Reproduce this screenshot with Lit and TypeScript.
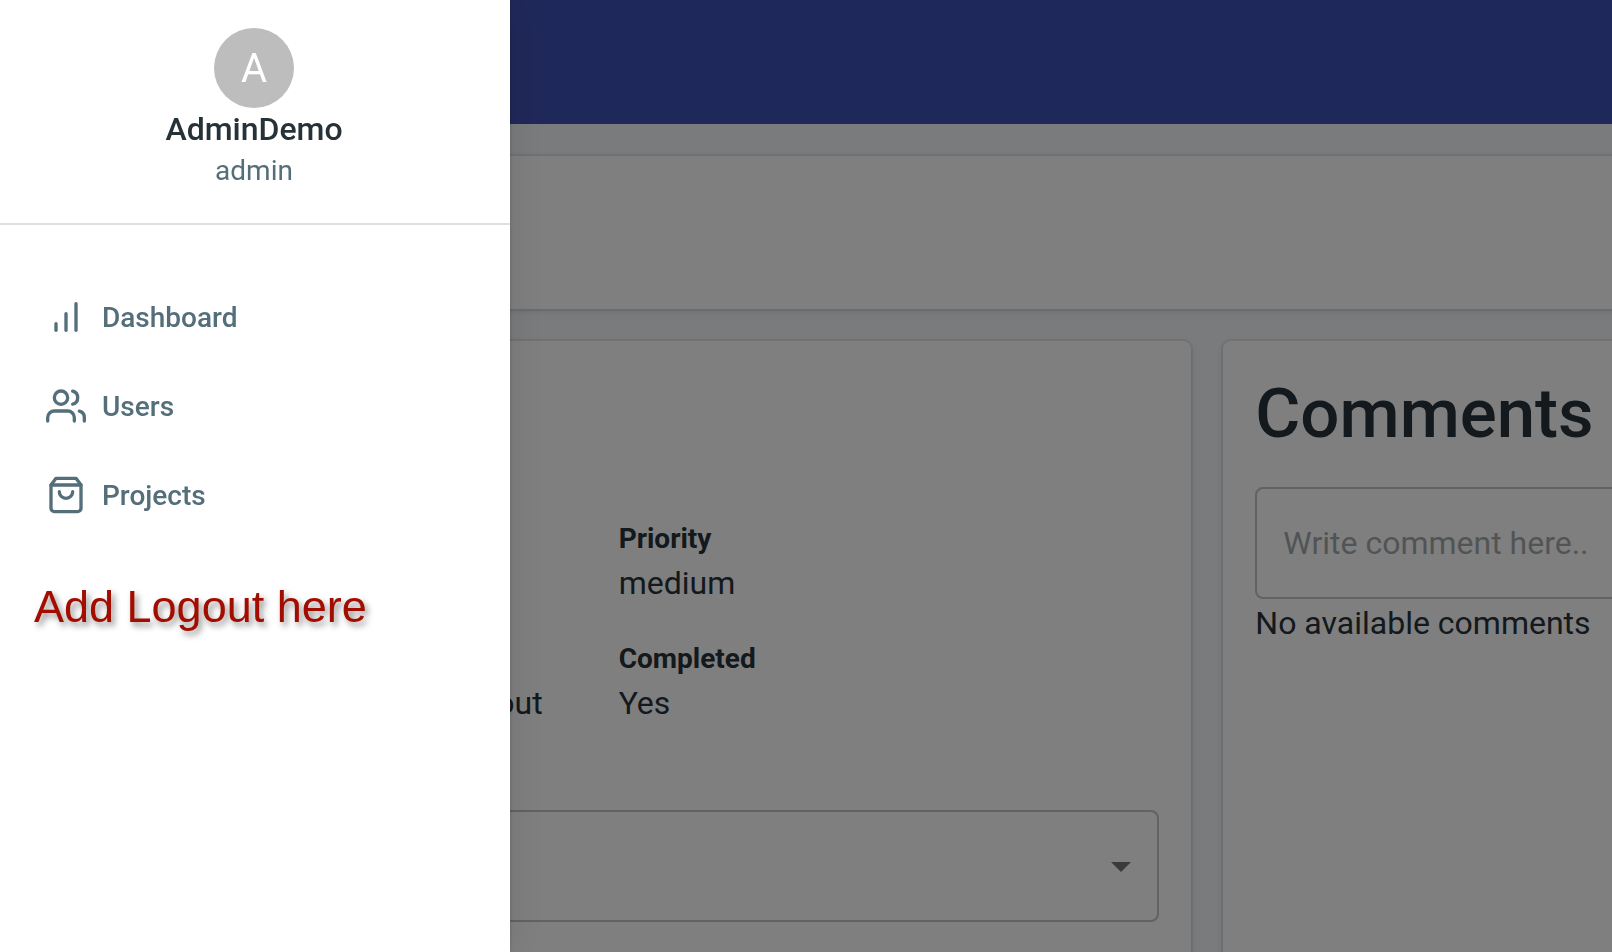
import { LitElement, html, css, svg } from "lit";
import { customElement } from "lit/decorators.js";

const icons = {
  chart: svg`<line x1="12" y1="20" x2="12" y2="10"></line><line x1="18" y1="20" x2="18" y2="4"></line><line x1="6" y1="20" x2="6" y2="16"></line>`,
  users: svg`<path d="M17 21v-2a4 4 0 0 0-4-4H5a4 4 0 0 0-4 4v2"></path><circle cx="9" cy="7" r="4"></circle><path d="M23 21v-2a4 4 0 0 0-3-3.87"></path><path d="M16 3.13a4 4 0 0 1 0 7.75"></path>`,
  bag: svg`<path d="M6 2L3 6v14a2 2 0 0 0 2 2h14a2 2 0 0 0 2-2V6l-3-4z"></path><line x1="3" y1="6" x2="21" y2="6"></line><path d="M16 10a4 4 0 0 1-8 0"></path>`,
};

const links = [
  { label: "Dashboard", icon: icons.chart },
  { label: "Users", icon: icons.users },
  { label: "Projects", icon: icons.bag },
];

@customElement("side-drawer")
export class SideDrawer extends LitElement {
  static styles = css`
    :host {
      display: block;
      box-sizing: border-box;
      background: #fff;
      color: #546e7a;
      overflow: hidden auto;
    }
    .profile {
      display: flex;
      flex-direction: column;
      align-items: center;
      padding: 28px 32px 32px 30px;
      border-bottom: 2px solid #e0e0e0;
    }
    .avatar {
      display: grid;
      place-items: center;
      width: 80px;
      height: 80px;
      border-radius: 50%;
      background: #bdbdbd;
      color: #fff;
      font-size: 40px;
      line-height: 82px;
    }
    .name {
      margin: 0;
      font-size: 32px;
      line-height: 42px;
      font-weight: 500;
      color: #263238;
    }
    .role {
      margin: 0;
      font-size: 28px;
      line-height: 41px;
    }
    ul {
      list-style: none;
      margin: 0;
      padding: 48px 32px 0;
    }
    a {
      display: flex;
      align-items: center;
      gap: 16px;
      padding: 20px 14px;
      font-size: 28px;
      line-height: 49px;
      font-weight: 500;
      color: inherit;
      text-decoration: none;
    }
    svg {
      flex: none;
      width: 40px;
      height: 40px;
      margin-bottom: 1px;
      fill: none;
      stroke: currentColor;
      stroke-width: 2;
      stroke-linecap: round;
      stroke-linejoin: round;
    }
    .note {
      margin: 41px 34px;
      font-family: "Liberation Sans", Arial, sans-serif;
      font-size: 45px;
      line-height: 52px;
      color: #a30d00;
      text-shadow: 3px 4px 6px rgba(0, 0, 0, 0.45);
    }
  `;

  render() {
    return html`
      <div class="profile">
        <div class="avatar">A</div>
        <h2 class="name">AdminDemo</h2>
        <p class="role">admin</p>
      </div>
      <nav>
        <ul>
          ${links.map(
            (link) => html`<li>
              <a href="#"><svg viewBox="0 0 24 24" aria-hidden="true">${link.icon}</svg>${link.label}</a>
            </li>`
          )}
        </ul>
      </nav>
      <p class="note">Add Logout here</p>
    `;
  }
}

@customElement("app-root")
export class AppRoot extends LitElement {
  static styles = css`
    :host {
      display: block;
      height: 100vh;
      overflow: hidden;
      background: #f4f6f8;
      font-family: Roboto, sans-serif;
      color: #263238;
    }
    .page {
      display: flex;
      flex-direction: column;
      min-width: 1835px;
      min-height: 100%;
    }
    .bar {
      height: 124px;
      background: #3f51b5;
    }
    main {
      flex: 1;
      display: grid;
      grid-template-columns: 2fr 1fr;
      grid-template-rows: auto 1fr;
      gap: 32px;
      padding: 32px 32px 0;
    }
    .card {
      border-radius: 8px;
      background: #fff;
      box-shadow: 0 0 0 2px rgba(63, 63, 68, 0.07), 0 2px 6px rgba(63, 63, 68, 0.15);
    }
    .summary {
      grid-column: 1 / -1;
      height: 153px;
    }
    .details {
      padding: 178px 32px 64px;
    }
    .comments {
      padding: 31px 32px;
    }
    dl {
      display: grid;
      grid-template-columns: 1fr 1fr;
      gap: 32px 14px;
      margin: 0 0 83px;
    }
    dt {
      font-size: 28px;
      line-height: 40px;
      font-weight: 700;
    }
    dd {
      margin: 0;
      font-size: 32px;
      line-height: 48px;
    }
    .task {
      grid-column: 1;
      grid-row: 2;
      align-self: end;
      padding-right: 62px;
      text-align: right;
    }
    .right {
      grid-column: 2;
    }
    .select {
      display: grid;
      align-items: center;
    }
    .select > * {
      grid-area: 1 / 1;
    }
    select,
    input {
      box-sizing: border-box;
      width: 100%;
      height: 112px;
      margin: 0;
      padding: 0 26px;
      border: 2px solid #c4c4c4;
      border-radius: 8px;
      background: transparent;
      font: inherit;
      font-size: 32px;
      color: inherit;
      appearance: none;
    }
    input::placeholder {
      color: #263238;
      opacity: 0.42;
    }
    .arrow {
      justify-self: end;
      width: 48px;
      height: 48px;
      margin-right: 14px;
      fill: #757575;
      pointer-events: none;
    }
    h1 {
      margin: 0 0 31px;
      font-size: 69px;
      line-height: 84px;
      font-weight: 500;
    }
    .empty {
      margin: 0;
      font-size: 32px;
      line-height: 48px;
    }
    .backdrop {
      position: fixed;
      inset: 0;
      background: rgba(0, 0, 0, 0.5);
    }
    side-drawer {
      position: fixed;
      inset: 0 auto 0 0;
      width: 510px;
      max-width: 100%;
      box-shadow: 0 0 4px rgba(0, 0, 0, 0.2), 0 0 40px rgba(0, 0, 0, 0.1);
    }
  `;

  render() {
    return html`
      <div class="page">
        <header class="bar"></header>
        <main>
          <section class="card summary"></section>
          <section class="card details">
            <dl>
              <div class="right">
                <dt>Priority</dt>
                <dd>medium</dd>
              </div>
              <div class="task"><dd>Logout</dd></div>
              <div class="right">
                <dt>Completed</dt>
                <dd>Yes</dd>
              </div>
            </dl>
            <div class="select">
              <select aria-label="Status"><option></option></select>
              <svg class="arrow" viewBox="0 0 24 24" aria-hidden="true"><path d="M7 10l5 5 5-5z"></path></svg>
            </div>
          </section>
          <section class="card comments">
            <h1>Comments</h1>
            <input type="text" aria-label="Comment" placeholder="Write comment here.." />
            <p class="empty">No available comments</p>
          </section>
        </main>
      </div>
      <div class="backdrop"></div>
      <side-drawer></side-drawer>
    `;
  }
}
